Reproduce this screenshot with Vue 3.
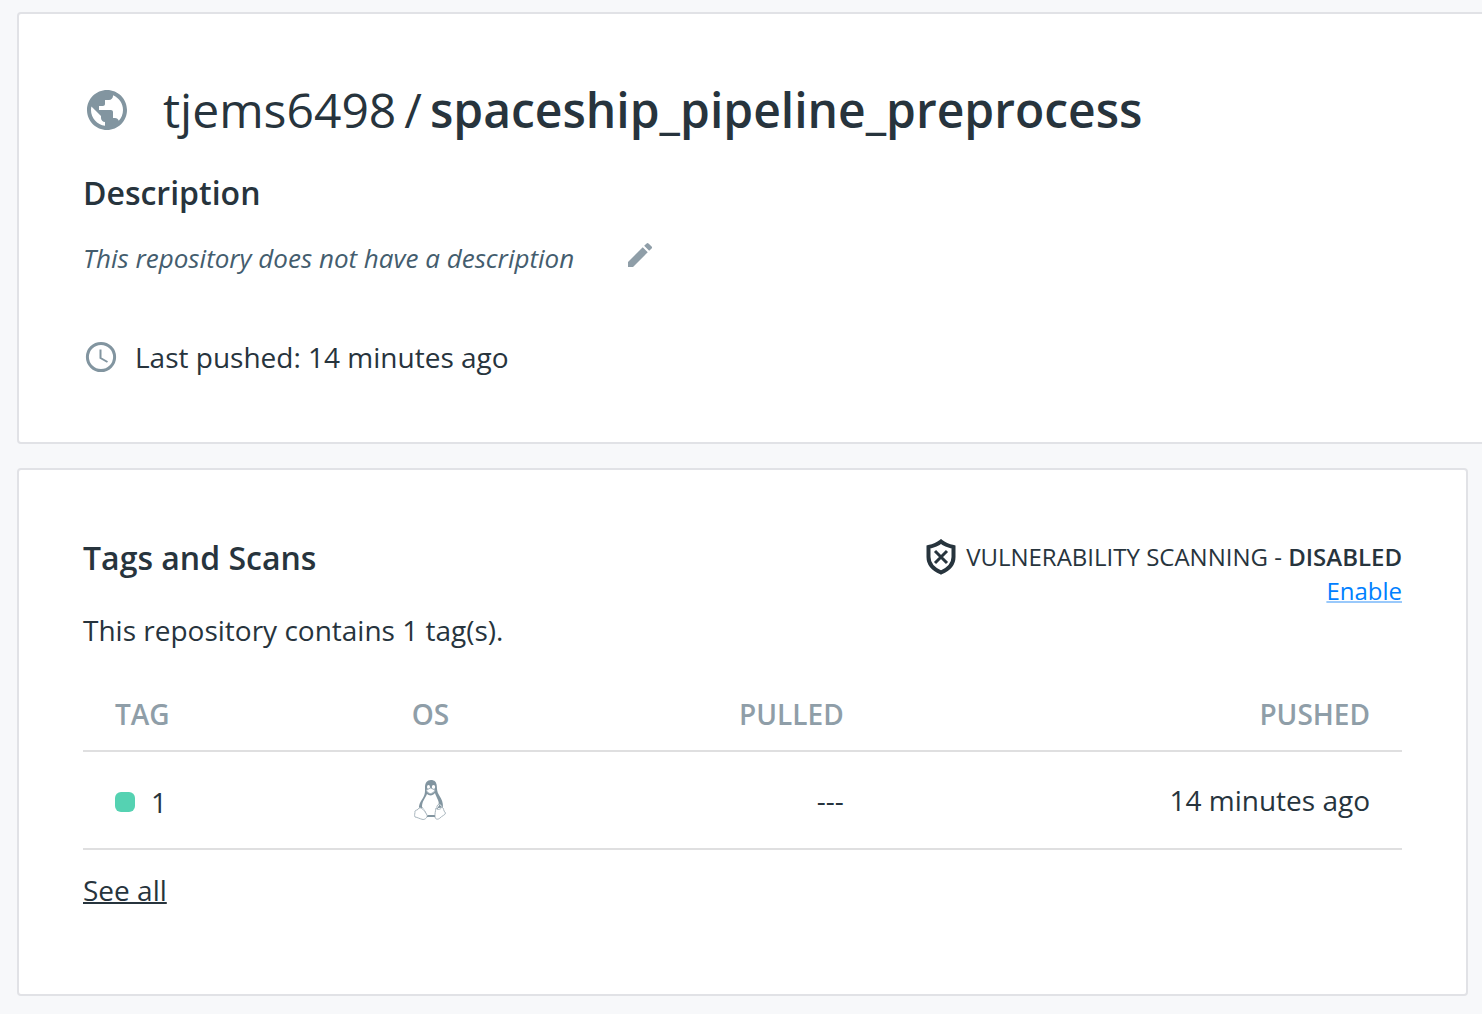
<script setup>
const repo = {
  owner: 'tjems6498',
  name: 'spaceship_pipeline_preprocess',
  lastPushed: '14 minutes ago',
}

const tags = [{ name: '1', pulled: '---', pushed: '14 minutes ago' }]
</script>

<template>
  <main class="page">
    <section class="card overview">
      <header class="repo">
        <svg class="globe" viewBox="0 0 24 24" aria-hidden="true">
          <path
            d="M12 2C6.48 2 2 6.48 2 12s4.48 10 10 10 10-4.48 10-10S17.52 2 12 2zm-1 17.93c-3.95-.49-7-3.85-7-7.93 0-.62.08-1.21.21-1.79L9 15v1c0 1.1.9 2 2 2v1.93zm6.9-2.54c-.26-.81-1-1.39-1.9-1.39h-1v-3c0-.55-.45-1-1-1H8v-2h2c.55 0 1-.45 1-1V7h2c1.1 0 2-.9 2-2v-.41c2.93 1.19 5 4.06 5 7.41 0 2.08-.8 3.97-2.1 5.39z"
          />
        </svg>
        <h1 class="title">
          <span>{{ repo.owner }}</span><span class="slash">/</span><strong>{{ repo.name }}</strong>
        </h1>
      </header>
      <h2 class="heading">Description</h2>
      <div class="description">
        <em>This repository does not have a description</em>
        <button type="button" class="edit" aria-label="Edit description">
          <svg viewBox="0 0 24 24" aria-hidden="true">
            <path
              d="M3 17.25V21h3.75L17.81 9.94l-3.75-3.75L3 17.25zM20.71 7.04a1 1 0 0 0 0-1.41l-2.34-2.34a1 1 0 0 0-1.41 0l-1.83 1.83 3.75 3.75 1.83-1.83z"
            />
          </svg>
        </button>
      </div>
      <p class="pushed">
        <svg viewBox="0 0 36 36" aria-hidden="true">
          <circle cx="18" cy="18" r="13.6" />
          <path class="hands" d="M17.500 10.500v8.500l7 4" />
        </svg>
        <span>Last pushed: {{ repo.lastPushed }}</span>
      </p>
    </section>

    <section class="card tags">
      <header class="tags-head">
        <h2 class="heading">Tags and Scans</h2>
        <div class="scan">
          <p class="scan-status">
            <svg viewBox="0 0 30 36" aria-hidden="true">
              <path class="shield" d="M15 2.500C12 5 7 7 2.500 8V18c0 8 5.500 12.500 12.500 15.500 7-3 12.500-7.500 12.500-15.500V8C23 7 18 5 15 2.500z" />
              <path class="cross" d="M9 12l12 12M21 12L9 24" />
            </svg>
            <span>VULNERABILITY SCANNING - <strong>DISABLED</strong></span>
          </p>
          <a class="enable" href="#enable">Enable</a>
        </div>
      </header>
      <p class="count">This repository contains {{ tags.length }} tag(s).</p>
      <table>
        <colgroup>
          <col class="col-tag" />
          <col class="col-os" />
          <col class="col-pulled" />
          <col />
        </colgroup>
        <thead>
          <tr>
            <th scope="col">TAG</th>
            <th scope="col">OS</th>
            <th scope="col" class="end">PULLED</th>
            <th scope="col" class="end">PUSHED</th>
          </tr>
        </thead>
        <tbody>
          <tr v-for="tag in tags" :key="tag.name">
            <td>
              <span class="tag"><i class="status"></i>{{ tag.name }}</span>
            </td>
            <td>
              <svg class="tux" viewBox="0 0 32 40" role="img" aria-label="Linux">
                <path
                  class="body"
                  d="M17 0c-4 0-6 3-6 7 0 5 .4 7-2.400 11.500C6 22.500 4.500 25 5 29l4-1 5 8h9l1-8 5-.5c0-5-1-8-4-12.500-2-3-2-6-2.200-9C22.500 2 20.500 0 17 0z"
                />
                <path
                  class="belly"
                  d="M13 14c2 2 6 2 8-1 1 4 4 7 4 12 0 1-1 2-2 3l-1 7h-9c-1-4-4-7-5-8 0-6 3-8 5-13z"
                />
                <ellipse class="belly" cx="14.500" cy="7" rx="1.500" ry="2" />
                <ellipse class="belly" cx="19.500" cy="7" rx="1.700" ry="2" />
                <path class="beak" d="M12.500 10l4-2 4.500 2c-.5 2-3 3.500-4.500 3.500s-3.500-1-4-3.500z" />
                <path class="foot" d="M5 28c2.500-1 5 2 8 7 .8 2-1.500 4.500-4 4.500-3-.5-5.500-2.200-8-2.500-1-1.500.2-4 0-6 .5-1.200 3-.5 4-3z" />
                <path class="foot" d="M22 28c1 2 4.500 2 6-1 2 1 1 3.500 3.500 6 0 2-4 3-5.500 5-1.500 1.500-4.500 2-5-1-.3-3 .5-6 1-9z" />
                <path class="base" d="M13 35.500h8v1.500h-8z" />
                <path class="feather" d="M25 24c-2 1-2.500 3-2 4.500M24.500 24c1.500 0 3 1 4 3.500" />
              </svg>
            </td>
            <td class="end">{{ tag.pulled }}</td>
            <td class="end">{{ tag.pushed }}</td>
          </tr>
        </tbody>
      </table>
      <a class="see-all" href="#tags">See all</a>
    </section>
  </main>
</template>

<style>
html {
  background: #f7f8fa;
}
</style>

<style scoped>
.page {
  display: flex;
  flex-direction: column;
  gap: 24px;
  padding: 12px 14px 18px 17px;
  overflow: hidden;
  color: #27343d;
  font: 28px/40px "Open Sans", sans-serif;
}
.card {
  padding: 64px;
  border: 2px solid #e1e2e6;
  border-radius: 4px;
  background: #fff;
}
.overview {
  margin-right: -40px;
}
.tags {
  padding: 68px 64px 84px;
}
h1,
h2,
p {
  margin: 0;
}
strong {
  font-weight: 600;
}
.repo {
  display: flex;
  align-items: center;
  gap: 32px;
}
.globe {
  width: 48px;
  height: 48px;
  fill: #8295a0;
}
.title {
  font-size: 48px;
  line-height: 64px;
  font-weight: 400;
}
.slash {
  margin: 0 8px;
}
.heading {
  font-size: 32px;
  line-height: 40px;
  font-weight: 600;
}
.overview .heading {
  margin-top: 31px;
}
.description {
  display: flex;
  align-items: center;
  gap: 50px;
  margin-top: 25px;
  color: #445d6e;
  font-size: 26px;
}
.edit {
  display: flex;
  padding: 0 0 6px;
  border: 0;
  background: none;
  cursor: pointer;
}
.edit svg {
  width: 32px;
  height: 32px;
  fill: #8f9ea8;
}
.pushed {
  display: flex;
  align-items: center;
  gap: 16px;
  margin: 59px 0 1px;
}
.pushed svg {
  width: 36px;
  height: 36px;
  fill: none;
  stroke: #8295a0;
  stroke-width: 3;
}
.pushed .hands {
  stroke-width: 2;
}
.tags-head {
  display: flex;
  justify-content: space-between;
  height: 72px;
}
.scan {
  padding-top: 2px;
  text-align: right;
  font-size: 24px;
  line-height: 34px;
}
.scan-status {
  display: flex;
  align-items: center;
  gap: 10px;
  height: 34px;
}
.scan-status svg {
  width: 30px;
  height: 36px;
  fill: none;
  stroke: #27343d;
  stroke-width: 4;
}
.scan-status .cross {
  stroke-width: 3;
}
.enable {
  color: #0080ff;
  text-decoration-line: underline;
  text-decoration-color: #99c9fb;
  text-decoration-thickness: 2px;
}
table {
  width: 100%;
  margin-top: 24px;
  border-collapse: collapse;
  table-layout: fixed;
}
.col-tag {
  width: 22.5%;
}
.col-os {
  width: 18%;
}
.col-pulled {
  width: 19.6%;
}
th,
td {
  padding: 0 32px;
  border-bottom: 2px solid #dfdfe0;
  text-align: left;
}
th {
  height: 72px;
  padding-top: 4px;
  color: #8f9ea8;
  font-weight: 600;
}
td {
  height: 96px;
}
.end {
  text-align: right;
}
.tag {
  display: flex;
  align-items: center;
  gap: 16px;
  padding-top: 4px;
}
.status {
  width: 20px;
  height: 20px;
  border-radius: 6px;
  background: #55d2b2;
}
.tux {
  display: block;
  width: 36px;
  height: 40px;
}
.body,
.base {
  fill: #8295a0;
}
.belly {
  fill: #fff;
}
.beak,
.foot,
.feather {
  fill: #fff;
  stroke: #a9b6be;
  stroke-width: 1;
}
.see-all {
  display: inline-block;
  margin-top: 20px;
  color: #27343d;
  text-decoration-thickness: 2px;
}
</style>
